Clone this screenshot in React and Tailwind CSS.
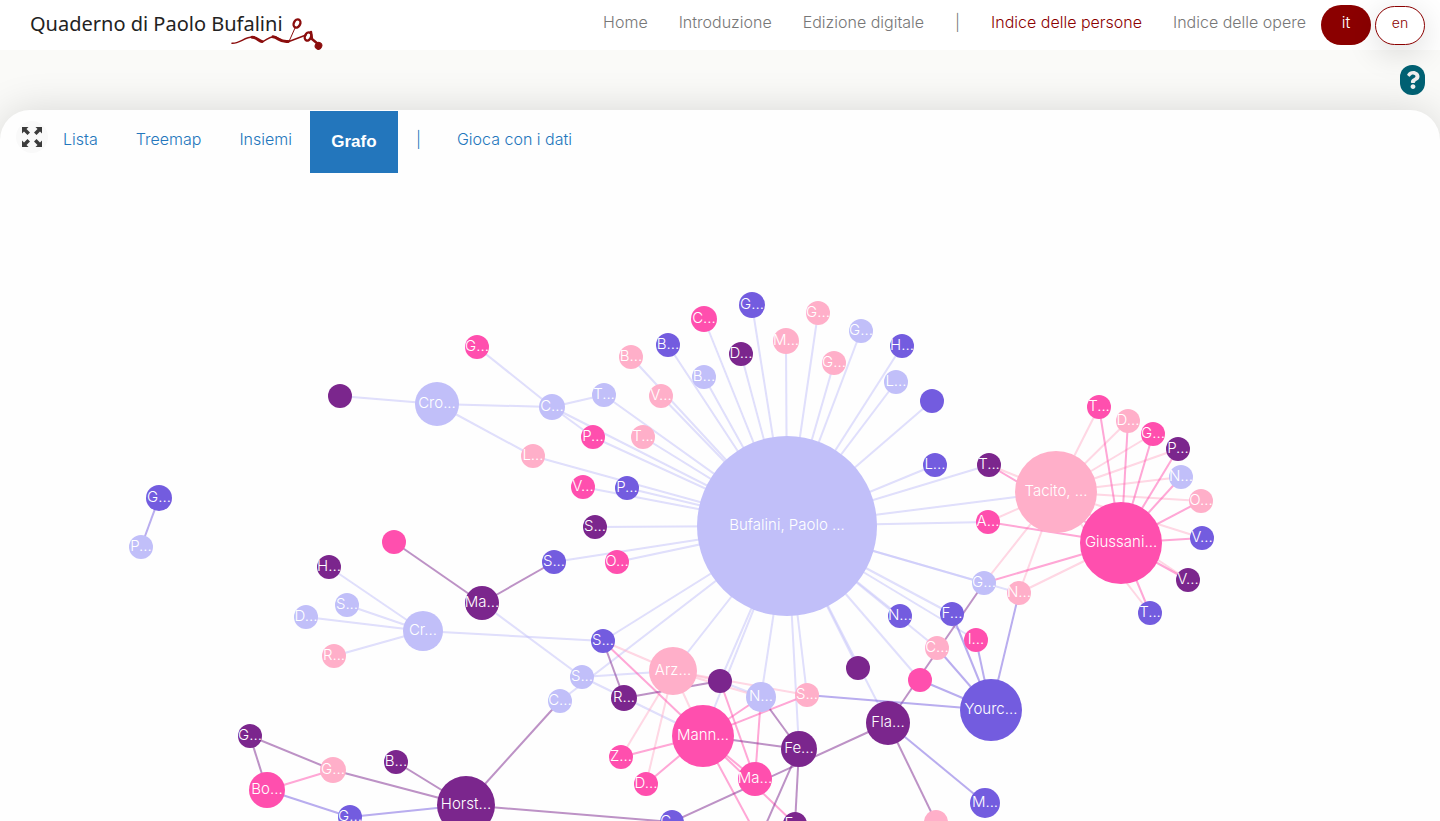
import React from "react";
import { FaQuestion } from "react-icons/fa";

const LAVENDER = "#c1bff9";
const ROSE = "#ffafc9";
const PINK = "#ff4fae";
const PURPLE = "#7b268d";
const BLUE = "#735cdf";

// id: [x, y, radius, colour, label]
const nodes = {
  buf: [787, 526, 90, LAVENDER, "Bufalini, Paolo ..."],
  tac: [1056, 492, 41, ROSE, "Tacito, ..."],
  giu: [1121, 543, 41, PINK, "Giussani..."],
  you: [991, 710, 31, BLUE, "Yourc..."],
  man: [703, 736, 31, PINK, "Mann..."],
  arz: [673, 671, 24, ROSE, "Arz..."],
  hor: [466, 805, 29, PURPLE, "Horst..."],
  fla: [888, 723, 22, PURPLE, "Fla..."],
  cro: [437, 404, 22, LAVENDER, "Cro..."],
  cr: [423, 631, 20, LAVENDER, "Cr..."],
  fe: [799, 749, 18, PURPLE, "Fe..."],
  bo: [267, 790, 18, PINK, "Bo..."],
  ma1: [482, 603, 17, PURPLE, "Ma..."],
  ma2: [755, 779, 17, PINK, "Ma..."],
  n1: [761, 697, 15, LAVENDER, "N..."],
  m2: [985, 803, 15, BLUE, "M..."],
  c1: [552, 407, 13, LAVENDER, "C..."],
  c2: [704, 319, 13, PINK, "C..."],
  g1: [752, 305, 13, BLUE, "G..."],
  m1: [786, 341, 13, ROSE, "M..."],
  g2: [159, 498, 13, BLUE, "G..."],
  g3: [333, 770, 13, ROSE, "G..."],
  r1: [624, 698, 13, PURPLE, "R..."],
  g4: [477, 347, 12, PINK, "G..."],
  e1: [340, 396, 12, PURPLE, ""],
  b1: [631, 357, 12, ROSE, "B..."],
  b2: [668, 345, 12, BLUE, "B..."],
  b3: [704, 377, 12, LAVENDER, "B..."],
  d1: [741, 354, 12, PURPLE, "D..."],
  t1: [604, 395, 12, LAVENDER, "T..."],
  v1: [661, 396, 12, ROSE, "V..."],
  p1: [593, 437, 12, PINK, "P..."],
  t2: [643, 437, 12, ROSE, "T..."],
  l1: [533, 456, 12, ROSE, "L..."],
  v2: [583, 487, 12, PINK, "V..."],
  p2: [627, 488, 12, BLUE, "P..."],
  s1: [595, 527, 12, PURPLE, "S..."],
  s2: [554, 562, 12, BLUE, "S..."],
  o1: [617, 562, 12, PINK, "O..."],
  g5: [818, 313, 12, ROSE, "G..."],
  g6: [834, 363, 12, ROSE, "G..."],
  g7: [861, 331, 12, LAVENDER, "G..."],
  h1: [902, 346, 12, BLUE, "H..."],
  l2: [896, 382, 12, LAVENDER, "L..."],
  e2: [932, 401, 12, BLUE, ""],
  l3: [935, 465, 12, BLUE, "L..."],
  t3: [989, 465, 12, PURPLE, "T..."],
  a1: [988, 522, 12, PINK, "A..."],
  g8: [984, 583, 12, LAVENDER, "G..."],
  n2: [1019, 593, 12, ROSE, "N..."],
  n3: [900, 616, 12, BLUE, "N..."],
  f1: [952, 614, 12, BLUE, "F..."],
  i1: [976, 640, 12, PINK, "I..."],
  c3: [937, 648, 12, ROSE, "C..."],
  e3: [920, 680, 12, PINK, ""],
  e4: [858, 668, 12, PURPLE, ""],
  s3: [807, 695, 12, ROSE, "S..."],
  e5: [720, 681, 12, PURPLE, ""],
  s4: [603, 641, 12, BLUE, "S..."],
  s5: [582, 677, 12, LAVENDER, "S..."],
  c4: [560, 701, 12, LAVENDER, "C..."],
  z1: [621, 757, 12, PINK, "Z..."],
  d2: [646, 784, 12, PINK, "D..."],
  t4: [1099, 407, 12, PINK, "T..."],
  d3: [1128, 421, 12, ROSE, "D..."],
  g9: [1153, 434, 12, PINK, "G..."],
  p3: [1178, 449, 12, PURPLE, "P..."],
  n4: [1181, 477, 12, LAVENDER, "N..."],
  o2: [1201, 501, 12, ROSE, "O..."],
  v3: [1202, 538, 12, BLUE, "V..."],
  v4: [1188, 580, 12, PURPLE, "V..."],
  t5: [1150, 613, 12, BLUE, "T..."],
  e6: [394, 542, 12, PINK, ""],
  h2: [329, 567, 12, PURPLE, "H..."],
  s6: [347, 605, 12, LAVENDER, "S..."],
  d4: [306, 617, 12, LAVENDER, "D..."],
  r2: [334, 656, 12, ROSE, "R..."],
  p4: [141, 547, 12, LAVENDER, "P..."],
  g10: [250, 736, 12, PURPLE, "G..."],
  b4: [396, 762, 12, PURPLE, "B..."],
  g11: [350, 817, 12, BLUE, "G..."],
  c5: [672, 822, 12, BLUE, "C..."],
  f2: [795, 824, 12, PURPLE, "F..."],
  e7: [936, 822, 12, ROSE, ""],
  x1: [755, 849, 12, PINK, ""],
  x2: [764, 849, 12, PINK, ""],
};

// colour of the links, start node, end nodes
const links = [
  [LAVENDER, "buf", "c1 t1 p1 t2 l1 v2 p2 s1 s2 o1 b1 b2 b3 v1 c2 d1 g1 m1 g5 g6 g7 h1 l2 e2 l3 t3 tac a1 g8 n2 n3 f1 i1 c3 e3 e4 fla s3 fe n1 e5 man arz s4 c4"],
  [LAVENDER, "cro", "e1 c1 l1"],
  [LAVENDER, "c1", "g4 t1 p1"],
  [LAVENDER, "cr", "h2 s6 d4 r2 s4"],
  [LAVENDER, "s5", "ma1 arz man"],
  [LAVENDER, "e5", "n1"],
  [ROSE, "tac", "t4 d3 g9 p3 n4 o2 v3 v4 t5 t3 a1 g8 n2"],
  [ROSE, "giu", "n2"],
  [PINK, "giu", "t4 d3 g9 p3 n4 o2 v3 v4 t5 t3 a1 g8"],
  [ROSE, "arz", "s4 e5 n1 s3 man z1 d2"],
  [PINK, "man", "s4 z1 d2 n1 s3 ma2 f2 x2"],
  [PINK, "ma2", "e5 n1"],
  [PINK, "bo", "g3"],
  [PURPLE, "fe", "man n1 f2 x1"],
  [PURPLE, "ma1", "e6 s2"],
  [PURPLE, "r1", "s4 e5"],
  [PURPLE, "hor", "c4 b4 g3 c5"],
  [PURPLE, "g10", "bo g3"],
  [PURPLE, "fla", "g8 e7 c5"],
  [BLUE, "you", "s3 e3 c3 f1 i1 n2"],
  [BLUE, "fla", "m2"],
  [BLUE, "g11", "bo hor"],
  [BLUE, "g2", "p4"],
];

function Graph() {
  return (
    <svg
      role="img"
      aria-label="Grafo delle persone"
      viewBox="0 173 1440 648"
      preserveAspectRatio="xMidYMin slice"
      className="min-h-0 w-full flex-1"
    >
      <g strokeWidth="2" strokeOpacity="0.5">
        {links.flatMap(([color, from, targets]) =>
          targets.split(" ").map((to) => (
            <line
              key={color + from + to}
              stroke={color}
              x1={nodes[from][0]}
              y1={nodes[from][1]}
              x2={nodes[to][0]}
              y2={nodes[to][1]}
            />
          ))
        )}
      </g>
      {Object.entries(nodes).map(([id, [x, y, r, color, label]]) => (
        <g key={id}>
          <circle cx={x} cy={y} r={r} fill={color} />
          {label && (
            <text x={x} y={y + 4} textAnchor="middle" fill="#fff" className="text-[15px] font-light">
              {label}
            </text>
          )}
        </g>
      ))}
    </svg>
  );
}

function Flourish() {
  return (
    <svg viewBox="0 0 92 34" className="absolute -right-10 top-1 h-[34px] w-[92px]" fill="none" stroke="#8b0d0d" strokeLinecap="round" aria-hidden="true">
      <path d="M1 27.200C8 28 15 20 23 21.200C27 22 28 26.500 32 25.500C36 24 38 20 44 20.800C48 21.500 49 26.500 58 25.500L75 19" strokeWidth="1.500" />
      <path d="M21 21.200C26 21 28 25.500 31 25.500M42 20.800C47 21.200 49 26.500 57 25.500" strokeWidth="3" />
      <path d="M58 25.500L64 12" strokeWidth="1" />
      <ellipse cx="66" cy="7.500" rx="3.200" ry="4.300" transform="rotate(25 66 7.500)" strokeWidth="2.400" />
      <ellipse cx="77" cy="20.500" rx="3" ry="4.200" transform="rotate(25 77 20.500)" strokeWidth="2.400" />
      <path d="M80 16L81 23L87 28" strokeWidth="2.400" />
      <ellipse cx="87.500" cy="29.800" rx="3.200" ry="3.500" fill="#8b0d0d" transform="rotate(35 87.500 29.800)" strokeWidth="1" />
    </svg>
  );
}

function ExpandIcon() {
  return (
    <svg viewBox="0 0 20 20" className="size-5" fill="#3b3b3b" aria-hidden="true">
      <path id="arrow" d="M0 0H6.500L4.500 2L8 5.500L5.500 8L2 4.500L0 6.500Z" />
      <use href="#arrow" transform="translate(20 0) scale(-1 1)" />
      <use href="#arrow" transform="translate(0 20) scale(1 -1)" />
      <use href="#arrow" transform="translate(20 20) scale(-1 -1)" />
    </svg>
  );
}

export default function App() {
  return (
    <div className="flex h-screen flex-col overflow-hidden bg-[#fafaf8] font-['Inter','Liberation_Sans',sans-serif] text-base font-light">
      <header className="flex h-[50px] shrink-0 items-start justify-between bg-white pl-[30px] pr-[15px]">
        <a href="#home" className="relative mt-3 font-['Noto_Sans',sans-serif] text-xl leading-6 font-normal whitespace-nowrap text-[#222]">
          Quaderno di Paolo Bufalini
          <Flourish />
        </a>
        <nav className="flex items-start whitespace-nowrap text-[#777]">
          <div className="mr-[15px] flex gap-[31px] pt-[10px] leading-6">
            <a href="#home">Home</a>
            <a href="#introduzione">Introduzione</a>
            <a href="#edizione">Edizione digitale</a>
            <span>|</span>
            <a href="#persone" aria-current="page" className="text-[#8b0000]">Indice delle persone</a>
            <a href="#opere">Indice delle opere</a>
          </div>
          <div className="flex gap-1 pt-[5px] leading-6">
            <button className="h-10 w-[50px] rounded-[20px] bg-[#8b0000] pb-1.5 text-white">it</button>
            <button className="relative mt-px h-[39px] w-[50px] rounded-[20px] border border-[#8b0000] bg-white pb-1.5 text-sm text-[#8b0000] shadow-[0_8px_32px_rgba(0,0,0,0.14)]">en</button>
          </div>
        </nav>
      </header>
      <div className="flex h-[60px] shrink-0 items-center justify-end pr-[15px]">
        <button aria-label="Aiuto" className="relative z-10 flex h-[30px] w-[25px] items-center justify-center rounded-xl bg-[#006072] text-[#eee]">
          <FaQuestion className="size-[18px]" />
        </button>
      </div>
      <main className="flex min-h-0 flex-1 flex-col rounded-t-[30px] bg-[#fefefe] shadow-[0_0_40px_rgba(0,0,0,0.14)]">
        <nav className="flex h-[63px] shrink-0 items-start pl-4 pt-px whitespace-nowrap text-[#2376bc]">
          <button aria-label="Schermo intero" className="mt-[10px] mr-[15px] flex size-8 items-center justify-center rounded-full bg-[#f9f9f9]">
            <ExpandIcon />
          </button>
          <div className="flex leading-[56px]">
            <a href="#lista">Lista</a>
            <a href="#treemap" className="ml-[38px]">Treemap</a>
            <a href="#insiemi" className="ml-[38px]">Insiemi</a>
            <a href="#grafo" aria-current="page" className="ml-[18px] h-[62px] w-[88px] bg-[#2376bc] text-center font-['Liberation_Sans',sans-serif] text-[17px] leading-[62px] font-bold text-white">Grafo</a>
            <span className="ml-[18px]">|</span>
            <a href="#gioca" className="ml-9">Gioca con i dati</a>
          </div>
        </nav>
        <Graph />
      </main>
    </div>
  );
}
